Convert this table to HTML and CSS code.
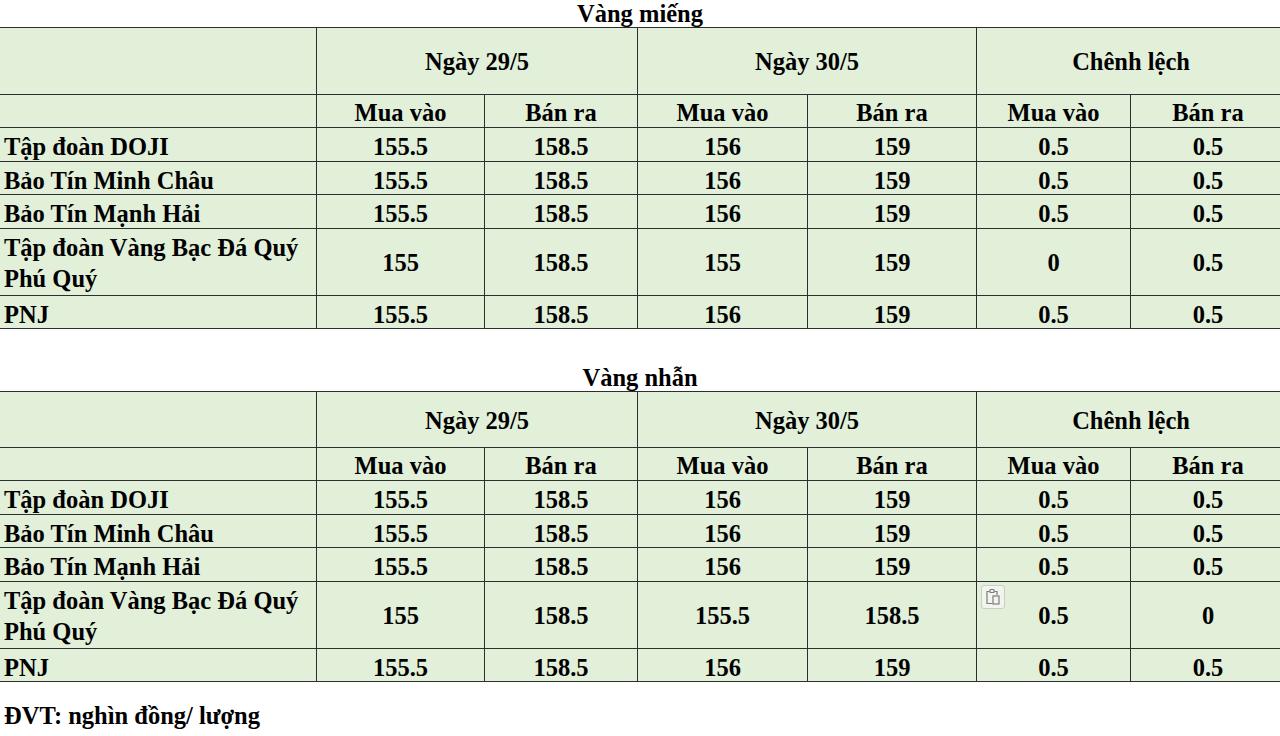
FILE: index.html
```html
<!DOCTYPE html>
<html lang="vi">
<head>
<meta charset="utf-8">
<title>Giá vàng</title>
<link rel="stylesheet" href="styles.css">
</head>
<body>
<div class="page">
  <div class="title">Vàng miếng</div>
  <table class="price">
    <colgroup>
      <col class="c-name"><col class="c2"><col class="c3"><col class="c4"><col class="c5"><col class="c6"><col class="c7">
    </colgroup>
    <tr class="h1 tall">
      <td></td>
      <td colspan="2">Ngày 29/5</td>
      <td colspan="2">Ngày 30/5</td>
      <td colspan="2">Chênh lệch</td>
    </tr>
    <tr class="h2">
      <td></td><td>Mua vào</td><td>Bán ra</td><td>Mua vào</td><td>Bán ra</td><td>Mua vào</td><td>Bán ra</td>
    </tr>
    <tr><td class="name">Tập đoàn DOJI</td><td>155.5</td><td>158.5</td><td>156</td><td>159</td><td>0.5</td><td>0.5</td></tr>
    <tr><td class="name">Bảo Tín Minh Châu</td><td>155.5</td><td>158.5</td><td>156</td><td>159</td><td>0.5</td><td>0.5</td></tr>
    <tr><td class="name">Bảo Tín Mạnh Hải</td><td>155.5</td><td>158.5</td><td>156</td><td>159</td><td>0.5</td><td>0.5</td></tr>
    <tr class="wrap"><td class="name">Tập đoàn Vàng Bạc Đá Quý Phú Quý</td><td>155</td><td>158.5</td><td>155</td><td>159</td><td>0</td><td>0.5</td></tr>
    <tr><td class="name">PNJ</td><td>155.5</td><td>158.5</td><td>156</td><td>159</td><td>0.5</td><td>0.5</td></tr>
  </table>

  <div class="title second">Vàng nhẫn</div>
  <table class="price">
    <colgroup>
      <col class="c-name"><col class="c2"><col class="c3"><col class="c4"><col class="c5"><col class="c6"><col class="c7">
    </colgroup>
    <tr class="h1 short">
      <td></td>
      <td colspan="2">Ngày 29/5</td>
      <td colspan="2">Ngày 30/5</td>
      <td colspan="2">Chênh lệch</td>
    </tr>
    <tr class="h2">
      <td></td><td>Mua vào</td><td>Bán ra</td><td>Mua vào</td><td>Bán ra</td><td>Mua vào</td><td>Bán ra</td>
    </tr>
    <tr><td class="name">Tập đoàn DOJI</td><td>155.5</td><td>158.5</td><td>156</td><td>159</td><td>0.5</td><td>0.5</td></tr>
    <tr><td class="name">Bảo Tín Minh Châu</td><td>155.5</td><td>158.5</td><td>156</td><td>159</td><td>0.5</td><td>0.5</td></tr>
    <tr><td class="name">Bảo Tín Mạnh Hải</td><td>155.5</td><td>158.5</td><td>156</td><td>159</td><td>0.5</td><td>0.5</td></tr>
    <tr class="wrap"><td class="name">Tập đoàn Vàng Bạc Đá Quý Phú Quý</td><td>155</td><td>158.5</td><td>155.5</td><td>158.5</td>
      <td class="has-paste"><span class="paste"><svg width="19" height="19" viewBox="0 0 19 19" fill="none" stroke="#7d7d7d" stroke-width="1.2"><path d="M5.5 4.5h-2.5v12h5.5"/><path d="M10.5 4.5h2.5v3.5"/><rect x="6" y="2.5" width="4" height="3" rx="0.6"/><rect x="9" y="9" width="6" height="8"/></svg></span>0.5</td>
      <td>0</td></tr>
    <tr><td class="name">PNJ</td><td>155.5</td><td>158.5</td><td>156</td><td>159</td><td>0.5</td><td>0.5</td></tr>
  </table>

  <div class="note">ĐVT: nghìn đồng/ lượng</div>
</div>
</body>
</html>
```

FILE: styles.css
```css
html, body {
  margin: 0;
  padding: 0;
  background: #ffffff;
  overflow: hidden;
}

.page {
  width: 1280px;
  height: 736px;
  overflow: hidden;
  font-family: "Liberation Serif", "Times New Roman", serif;
  font-weight: bold;
  font-size: 24.5px;
  color: #000;
}

.title {
  text-align: center;
  height: 27px;
  line-height: 27px;
}

.title.second {
  margin-top: 35px;
}

.price {
  border-collapse: collapse;
  table-layout: fixed;
  width: 1286px;
  margin-left: -1px;
  background: #e2efd9;
}

.price td {
  border: 1px solid #2e2e2e;
  padding: 5px 0 0 0;
  text-align: center;
  vertical-align: middle;
  height: 27.5px;
  line-height: 27.5px;
}

.c-name { width: 317px; }
.c2 { width: 168px; }
.c3 { width: 153px; }
.c4 { width: 170px; }
.c5 { width: 169px; }
.c6 { width: 154px; }
.c7 { width: 155px; }

.price td.name {
  text-align: left;
  padding-left: 4px;
  padding-right: 4px;
}

.price tr.tall td { padding-top: 2px; height: 64px; }
.price tr.short td { padding-top: 2px; height: 53px; }
.price tr.h2 td { padding-top: 4px; height: 28px; line-height: 28px; }
.price tr.wrap td { padding-top: 3px; height: 63px; line-height: 31.5px; }

.has-paste {
  position: relative;
}

.paste {
  position: absolute;
  left: 4px;
  top: 3px;
  width: 24px;
  height: 24px;
  box-sizing: border-box;
  border: 1px solid #cdcdc6;
  border-radius: 3px;
  background: #f2f4ee;
  display: flex;
  align-items: center;
  justify-content: center;
}

.paste svg { display: block; }

.note {
  margin-top: 19px;
  padding-left: 4px;
  line-height: 30px;
}
```
